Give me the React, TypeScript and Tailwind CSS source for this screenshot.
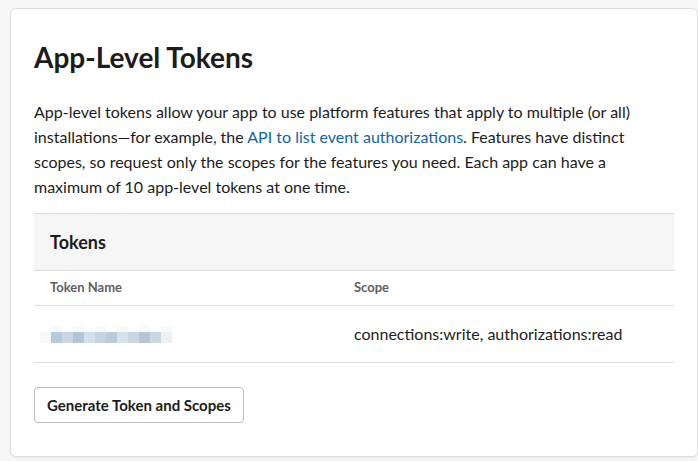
import React from 'react';

const blurBlocks = [
  '#f7f8fa', '#b7cadb', '#cdd6e3', '#b2c6d9', '#d6e0ea', '#c5d3e0',
  '#b9cadb', '#d8e1ea', '#cad7e2', '#b5c5d9', '#c8d7e0', '#ecf0f8',
];

const tokens = [{ id: 'tok-1', scope: 'connections:write, authorizations:read' }];

// Pixelated placeholder for the hidden token name
const BlurredName: React.FC = () => (
  <div className="flex flex-col">
    <div className="flex h-[6px]">
      {blurBlocks.map((_, i) => (
        <div key={i} className={`w-[11px] ${i % 2 === 1 ? 'bg-[#f8faf9]' : 'bg-white'}`} />
      ))}
    </div>
    <div className="flex h-[11px]">
      {blurBlocks.map((c, i) => (
        <div key={i} className="w-[11px]" style={{ backgroundColor: c }} />
      ))}
    </div>
  </div>
);

export default function App() {
  return (
    <div
      className="min-h-[461px] w-[698px] bg-[#f6f6f6] pt-[8px] pl-[10px] text-[#1d1c1d]"
      style={{ fontFamily: 'Lato, "Noto Sans", sans-serif' }}
    >
      <div className="w-[688px] rounded-[6px] border border-[#dedede] bg-white px-[23px] pt-[30px] pb-[33px] shadow-[0_1px_2px_rgba(0,0,0,0.06)]">
        <h1 className="text-[28px] font-bold leading-[36px]">App-Level Tokens</h1>

        <p className="mt-[24px] text-[16px] leading-[25px]">
          App-level tokens allow your app to use platform features that apply to multiple (or all)
          installations—for example, the{' '}
          <a className="text-[#1264a3]">API to list event authorizations</a>. Features have distinct
          scopes, so request only the scopes for the features you need. Each app can have a maximum
          of 10 app-level tokens at one time.
        </p>

        {/* Tokens table */}
        <div className="mt-[14px]">
          <div className="flex h-[58px] items-center border-y border-[#dddddd] bg-[#f5f5f5] px-[16px]">
            <h2 className="text-[18px] font-bold">Tokens</h2>
          </div>
          <div className="grid h-[35px] grid-cols-[304px_1fr] items-center border-b border-[#dddddd] px-[16px] text-[13px] font-bold text-[#616061]">
            <div>Token Name</div>
            <div>Scope</div>
          </div>
          {tokens.map((t) => (
            <div
              key={t.id}
              className="grid h-[57px] grid-cols-[304px_1fr] items-center border-b border-[#dddddd] pr-[16px] pl-[6px] text-[16px]"
            >
              <div>
                <BlurredName />
              </div>
              <div className="pl-[10px]">{t.scope}</div>
            </div>
          ))}
        </div>

        <button className="mt-[24px] h-[36px] rounded-[4px] border border-[#bcbcbc] bg-white px-[12px] text-[15px] font-bold text-[#1d1c1d]">
          Generate Token and Scopes
        </button>
      </div>
    </div>
  );
}
